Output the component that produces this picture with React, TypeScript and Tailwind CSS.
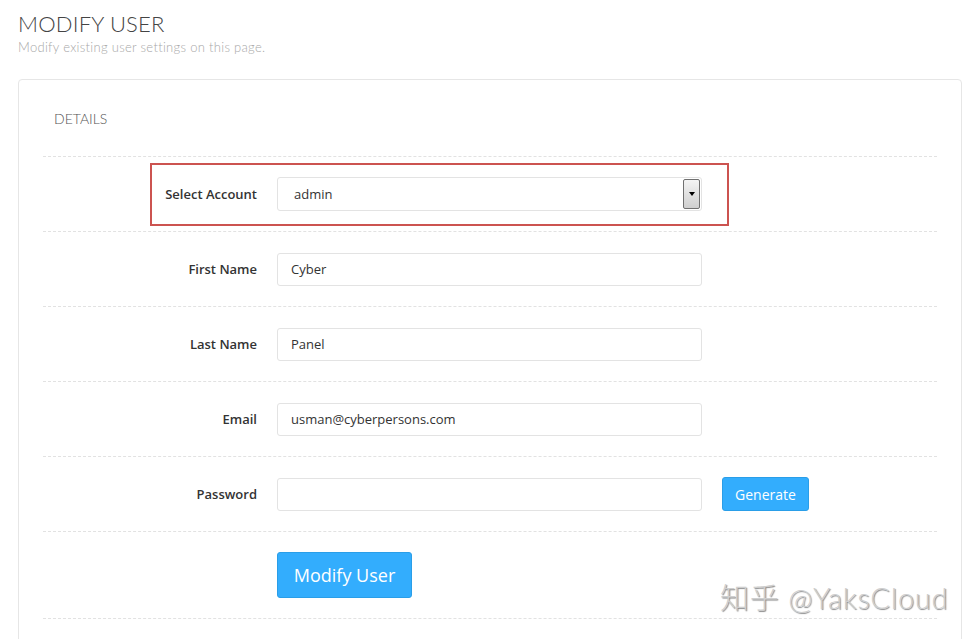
import React from "react";

const Row = ({ label, children }: { label: string; children?: React.ReactNode }) => (
  <div className="flex items-center h-[75px] border-b border-dashed border-[#e2e2e2]">
    <div className="w-[214px] pr-0 text-right text-[13px] font-semibold text-[#333] pt-[2px]">{label}</div>
    <div className="ml-[20px] flex items-center">{children}</div>
  </div>
);

const Input = ({ value }: { value: string }) => (
  <div className="w-[425px] h-[33px] border border-[#e3e3e3] rounded-[3px] flex items-center pl-[13px] pt-[2px] text-[13px] text-[#333]">
    {value}
  </div>
);

export default function App() {
  return (
    <div className="w-[978px] h-[639px] bg-white overflow-hidden relative" style={{ fontFamily: '"Open Sans", "Liberation Sans", sans-serif' }}>
      <div className="pl-[18px] pt-[10px]">
        <div className="text-[22px] leading-[28px] font-light text-[#444] tracking-[0.2px]" style={{ fontFamily: 'Lato, "Open Sans", sans-serif' }}>MODIFY USER</div>
        <div className="text-[13px] leading-[16px] font-light text-[#a8a8a8] mt-[1px] tracking-[0.3px]" style={{ fontFamily: 'Lato, "Open Sans", sans-serif' }}>Modify existing user settings on this page.</div>
      </div>
      <div className="ml-[18px] mt-[24px] w-[944px] h-[600px] border border-[#e6e6e6] rounded-[4px] px-[24px]">
        <div className="h-[77px] border-b border-dashed border-[#e2e2e2] pl-[11px] pt-[28px] text-[14px] font-light text-[#555]" style={{ fontFamily: 'Lato, "Open Sans", sans-serif' }}>
          DETAILS
        </div>
        <div className="relative">
          <div className="absolute left-[107px] top-[6px] w-[579px] h-[63px] border-2 border-[#cc5350]" />
          <Row label="Select Account">
            <div className="w-[425px] h-[34px] border border-[#e3e3e3] rounded-[3px] flex items-center pl-[16px] pt-[2px] text-[13px] text-[#333] relative">
              admin
              <div className="absolute right-[1px] top-[1px] w-[17px] h-[30px] border border-[#707070] rounded-[2px] bg-gradient-to-b from-[#f4f4f4] to-[#cfcfcf] flex items-center justify-center">
                <div className="w-0 h-0 border-l-[3.5px] border-r-[3.5px] border-t-[4px] border-l-transparent border-r-transparent border-t-black" />
              </div>
            </div>
          </Row>
        </div>
        <Row label="First Name"><Input value="Cyber" /></Row>
        <Row label="Last Name"><Input value="Panel" /></Row>
        <Row label="Email"><Input value="usman@cyberpersons.com" /></Row>
        <Row label="Password">
          <Input value="" />
          <div className="ml-[20px] w-[87px] h-[34px] bg-[#33adfd] border border-[#2a9ee8] rounded-[3px] text-white text-[14px] flex items-center justify-center pt-[1px]">Generate</div>
        </Row>
        <div className="h-[87px] border-b border-dashed border-[#e2e2e2] flex items-center pl-[234px]">
          <div className="w-[135px] h-[46px] bg-[#33adfd] border border-[#2a9ee8] rounded-[3px] text-white text-[18px] flex items-center justify-center">Modify User</div>
        </div>
      </div>
      <div className="absolute left-[720px] top-[576px] text-[29px] font-light text-[#cfcfcf] tracking-[0.8px]" style={{ fontFamily: 'Lato, "Noto Sans CJK SC", sans-serif', textShadow: "1px 1px 1px #8a8a8a" }}>知乎 @YaksCloud</div>
    </div>
  );
}
